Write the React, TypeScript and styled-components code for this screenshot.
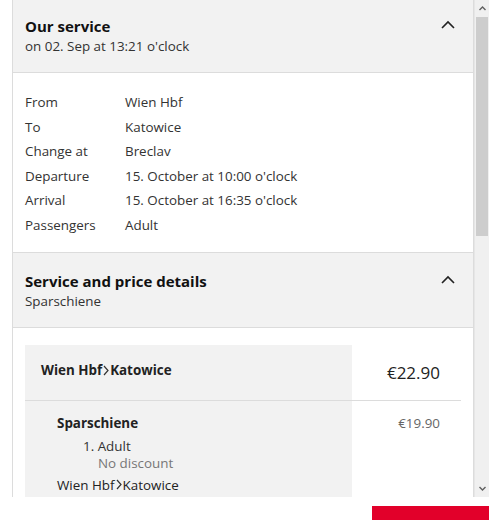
import styled, { createGlobalStyle } from 'styled-components';

const GlobalStyle = createGlobalStyle`
  html, body {
    margin: 0;
    padding: 0;
    background: #ffffff;
    font-family: "Open Sans", "Noto Sans", sans-serif;
    color: #222;
  }
`;

const Page = styled.div`
  width: 489px;
  display: flex;
  flex-direction: column;
`;

const Viewport = styled.div`
  height: 497px;
  display: flex;
  overflow: hidden;
`;

const Content = styled.div`
  flex: 1;
  padding-left: 12px;
  overflow: hidden;
`;

const Panel = styled.div`
  border-left: 1px solid #dcdcdc;
  border-right: 1px solid #dcdcdc;
`;

const SectionHeader = styled.div<{ $top: number }>`
  display: flex;
  align-items: flex-start;
  justify-content: space-between;
  background: #f2f2f2;
  padding: ${({ $top }) => `${$top}px 18px 16px 12px`};
  border-bottom: 1px solid #dcdcdc;
`;

const Title = styled.div`
  font-size: 15px;
  font-weight: 700;
  color: #111;
  line-height: 21px;
`;

const Subtitle = styled.div`
  font-size: 13.4px;
  color: #333;
  line-height: 19px;
`;

const Chevron = styled.svg`
  margin-top: 4px;
  flex-shrink: 0;
`;

const Details = styled.div`
  display: grid;
  grid-template-columns: 100px 1fr;
  padding: 17px 12px 14px;
  border-bottom: 1px solid #dcdcdc;
  font-size: 13.4px;
  line-height: 24.6px;
  color: #333;
`;

const Body = styled.div`
  padding: 17px 12px 0;
`;

const PriceTable = styled.div`
  display: grid;
  grid-template-columns: 327px 1fr;
`;

const HeadRoute = styled.div`
  height: 56px;
  box-sizing: border-box;
  display: flex;
  align-items: center;
  padding: 0 16px 4px;
  background: #f2f2f2;
  border-bottom: 1px solid #dcdcdc;
`;

const HeadPrice = styled.div`
  height: 56px;
  box-sizing: border-box;
  display: flex;
  align-items: center;
  justify-content: flex-end;
  padding-right: 21px;
  font-size: 17px;
  color: #222;
  border-bottom: 1px solid #dcdcdc;
`;

const FareCell = styled.div`
  background: #f2f2f2;
  padding: 12px 16px 40px 32px;
`;

const FarePrice = styled.div`
  text-align: right;
  padding: 12px 21px 0 0;
  font-size: 13.4px;
  line-height: 20px;
  color: #666;
`;

const Route = styled.span<{ $bold?: boolean }>`
  display: inline-flex;
  align-items: center;
  font-size: 13.4px;
  font-weight: ${({ $bold }) => ($bold ? 700 : 400)};
  color: #222;
  line-height: 20px;
`;

const Arrow = styled.svg`
  margin: 0 1px;
`;

const FareName = styled.div`
  font-size: 13.4px;
  font-weight: 700;
  color: #222;
  line-height: 20px;
  margin-bottom: 5px;
`;

const Passenger = styled.div`
  padding-left: 26px;
  font-size: 13.4px;
  line-height: 17px;
  color: #333;
`;

const Discount = styled.div`
  padding-left: 15px;
  color: #777;
`;

const RouteLine = styled.div`
  margin-top: 1px;
`;

const Scrollbar = styled.div`
  width: 14px;
  background: #f0f0f0;
  border-left: 1px solid #e6e6e6;
  display: flex;
  flex-direction: column;
`;

const ScrollButton = styled.div`
  height: 17px;
  display: flex;
  align-items: center;
  justify-content: center;
`;

const Track = styled.div`
  flex: 1;
`;

const Thumb = styled.div`
  height: 219px;
  margin: 0 1px;
  background: #cdcdcd;
`;

const Footer = styled.div`
  display: flex;
  justify-content: flex-end;
  padding-top: 9px;
`;

const BookButton = styled.button`
  width: 117px;
  height: 40px;
  border: none;
  background: #e2002a;
`;

function Caret({ down }: { down?: boolean }) {
  return (
    <svg width="7" height="5" viewBox="0 0 7 5">
      <path
        d={down ? 'M0.5 1 L3.5 4 L6.5 1' : 'M0.5 4 L3.5 1 L6.5 4'}
        fill="none"
        stroke="#606060"
        strokeWidth="1.4"
      />
    </svg>
  );
}

function UpChevron() {
  return (
    <Chevron width="14" height="9" viewBox="0 0 14 9">
      <path d="M1 8 L7 2 L13 8" fill="none" stroke="#222" strokeWidth="1.6" />
    </Chevron>
  );
}

function RouteName({ bold }: { bold?: boolean }) {
  return (
    <Route $bold={bold}>
      Wien Hbf
      <Arrow width="6" height="11" viewBox="0 0 6 11">
        <path d="M1 1 L5 5.5 L1 10" fill="none" stroke="#333" strokeWidth="1.2" />
      </Arrow>
      Katowice
    </Route>
  );
}

const details: [string, string][] = [
  ['From', 'Wien Hbf'],
  ['To', 'Katowice'],
  ['Change at', 'Breclav'],
  ['Departure', "15. October at 10:00 o'clock"],
  ['Arrival', "15. October at 16:35 o'clock"],
  ['Passengers', 'Adult'],
];

export default function App() {
  return (
    <Page>
      <GlobalStyle />
      <Viewport>
        <Content>
          <Panel>
            <SectionHeader $top={16}>
              <div>
                <Title>Our service</Title>
                <Subtitle>on 02. Sep at 13:21 o'clock</Subtitle>
              </div>
              <UpChevron />
            </SectionHeader>
            <Details>
              {details.flatMap(([label, value]) => [
                <span key={label}>{label}</span>,
                <span key={label + '-v'}>{value}</span>,
              ])}
            </Details>
            <SectionHeader $top={18}>
              <div>
                <Title>Service and price details</Title>
                <Subtitle>Sparschiene</Subtitle>
              </div>
              <UpChevron />
            </SectionHeader>
            <Body>
              <PriceTable>
                <HeadRoute>
                  <RouteName bold />
                </HeadRoute>
                <HeadPrice>€22.90</HeadPrice>
                <FareCell>
                  <FareName>Sparschiene</FareName>
                  <Passenger>
                    1. Adult
                    <Discount>No discount</Discount>
                  </Passenger>
                  <RouteLine>
                    <RouteName />
                  </RouteLine>
                </FareCell>
                <FarePrice>€19.90</FarePrice>
              </PriceTable>
            </Body>
          </Panel>
        </Content>
        <Scrollbar>
          <ScrollButton>
            <Caret />
          </ScrollButton>
          <Track>
            <Thumb />
          </Track>
          <ScrollButton>
            <Caret down />
          </ScrollButton>
        </Scrollbar>
      </Viewport>
      <Footer>
        <BookButton />
      </Footer>
    </Page>
  );
}
